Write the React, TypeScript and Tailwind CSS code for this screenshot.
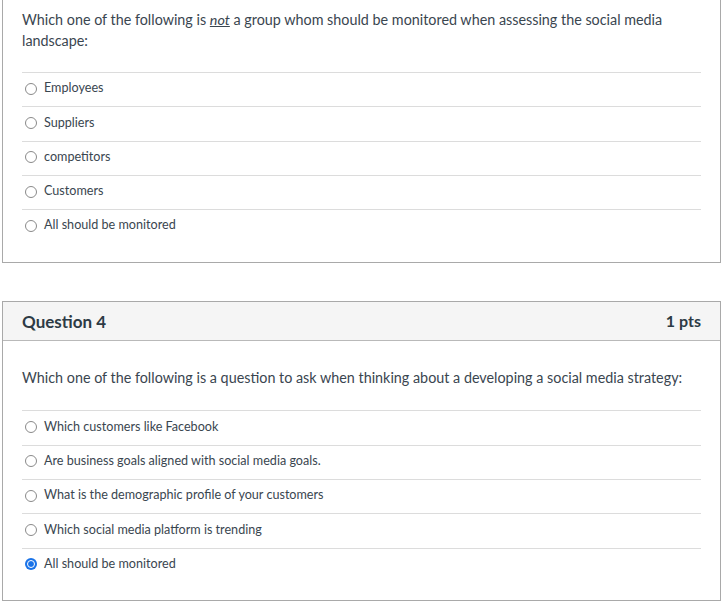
import React from "react";

type Question = {
  prompt: React.ReactNode;
  answers: string[];
  selected?: number;
};

const Q3: Question = {
  prompt: (
    <>
      Which one of the following is <em className="underline">not</em> a group whom should be monitored when assessing the social media landscape:
    </>
  ),
  answers: ["Employees", "Suppliers", "competitors", "Customers", "All should be monitored"],
};

const Q4: Question = {
  prompt: "Which one of the following is a question to ask when thinking about a developing a social media strategy:",
  answers: [
    "Which customers like Facebook",
    "Are business goals aligned with social media goals.",
    "What is the demographic profile of your customers",
    "Which social media platform is trending",
    "All should be monitored",
  ],
  selected: 4,
};

function Radio({ checked }: { checked?: boolean }) {
  if (checked) {
    return (
      <span className="w-[12px] h-[12px] rounded-full bg-[#1a73e8] flex items-center justify-center shrink-0">
        <span className="w-[8px] h-[8px] rounded-full border-[1.5px] border-white bg-[#1a73e8]" />
      </span>
    );
  }
  return <span className="w-[12px] h-[12px] rounded-full border border-[#8a8a8a] bg-white shrink-0" />;
}

function Answers({ q }: { q: Question }) {
  return (
    <div className="mx-[19px]">
      {q.answers.map((a, i) => (
        <div key={i} className="h-[34.3px] border-t border-[#dcdcdc] flex items-center gap-[7px] pl-[3px] pb-[2px]">
          <Radio checked={q.selected === i} />
          <span className="text-[12.6px] text-[#3a4650]">{a}</span>
        </div>
      ))}
    </div>
  );
}

export default function App() {
  return (
    <div className="w-[723px] h-[601px] bg-white px-[2px] overflow-hidden" style={{ fontFamily: "Lato, 'Noto Sans', sans-serif" }}>
      {/* previous question, top scrolled away */}
      <div className="w-[719px] border-x border-b border-[#a9a9a9] pb-[19px]">
        <p className="px-[19px] pt-[9px] pb-[21px] text-[14.35px] leading-[21px] text-[#3a4650]">{Q3.prompt}</p>
        <Answers q={Q3} />
      </div>

      <div className="w-[719px] mt-[38px] border border-[#a9a9a9]">
        <div className="h-[39px] bg-[#f5f5f5] border-b border-[#b9b9b9] flex items-center justify-between px-[19px]">
          <span className="text-[17px] font-bold text-[#2d3b45]">Question 4</span>
          <span className="text-[16px] font-bold text-[#2d3b45]">1 pts</span>
        </div>
        <p className="px-[19px] pt-[26px] pb-[22px] text-[14.35px] leading-[21px] text-[#3a4650]">{Q4.prompt}</p>
        <Answers q={Q4} />
        <div className="h-[18px]" />
      </div>
    </div>
  );
}
